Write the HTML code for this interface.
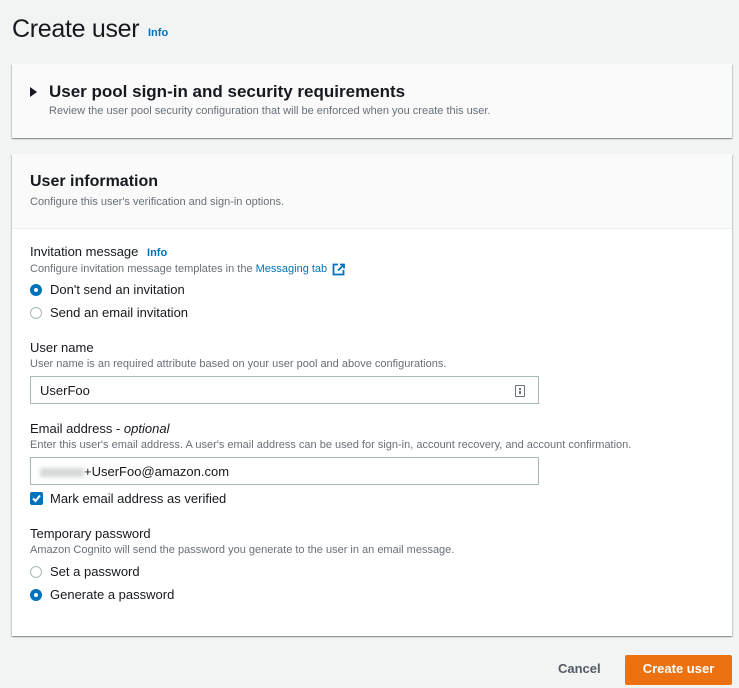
<!DOCTYPE html>
<html><head><style>
body{margin:0;width:739px;height:688px;background:#f2f3f3;font-family:"Liberation Sans",sans-serif;color:#16191f;position:relative;overflow:hidden}
.a{position:absolute;white-space:nowrap}
.s{font-size:11px;color:#687078}
.l{font-size:13px}
.lnk{color:#0073bb}
.panel{position:absolute;left:12px;width:720px;background:#fff;box-shadow:0 1px 1px rgba(0,28,36,.3),1px 1px 1px rgba(0,28,36,.15),-1px 1px 1px rgba(0,28,36,.15)}
.radio{position:absolute;width:12px;height:12px;border-radius:50%;box-sizing:border-box;border:1px solid #aab7b8;background:#fff}
.radio.on{border:4px solid #0073bb}
.inp{position:absolute;left:30px;width:509px;height:28px;box-sizing:border-box;border:1px solid #aab7b8;background:#fff;font-size:13px;line-height:28px;padding-left:9px}
</style></head><body>
<div class="a" style="left:12px;top:15px;font-size:25px;letter-spacing:-0.3px;color:#16191f">Create user</div>
<div class="a lnk" style="left:148px;top:27px;font-size:11px;font-weight:bold">Info</div>

<div class="panel" style="top:64px;height:74px;background:#fafafa"></div>
<div class="a" style="left:30px;top:87px;width:0;height:0;border-left:7px solid #16191f;border-top:5px solid transparent;border-bottom:5px solid transparent"></div>
<div class="a" style="left:49px;top:82px;font-size:17px;font-weight:bold">User pool sign-in and security requirements</div>
<div class="a s" style="left:49px;top:105px">Review the user pool security configuration that will be enforced when you create this user.</div>

<div class="panel" style="top:154px;height:482px"></div>
<div class="a" style="left:12px;top:154px;width:720px;height:74px;background:#fafafa;border-bottom:1px solid #eaeded"></div>
<div class="a" style="left:30px;top:173px;font-size:16px;font-weight:bold">User information</div>
<div class="a s" style="left:30px;top:196px">Configure this user's verification and sign-in options.</div>

<div class="a l" style="left:30px;top:244px">Invitation message <span class="lnk" style="font-size:11px;font-weight:bold;margin-left:5px">Info</span></div>
<div class="a s" style="left:30px;top:263px">Configure invitation message templates in the <span class="lnk">Messaging tab</span></div>
<svg class="a" style="left:332px;top:263px" width="14" height="13" viewBox="0 0 14 13"><path d="M6 1.5H1.5v10h10V7M8 1.5h4v4M12 1.5L6 7.5" fill="none" stroke="#0073bb" stroke-width="1.8"/></svg>
<div class="radio on" style="left:30px;top:284px"></div>
<div class="a l" style="left:50px;top:282px">Don't send an invitation</div>
<div class="radio" style="left:30px;top:307px"></div>
<div class="a l" style="left:50px;top:305px">Send an email invitation</div>

<div class="a l" style="left:30px;top:340px">User name</div>
<div class="a s" style="left:30px;top:358px">User name is an required attribute based on your user pool and above configurations.</div>
<div class="inp" style="top:376px">UserFoo</div>
<div class="a" style="left:515px;top:385px;width:8px;height:10px;border:1px solid #687078;border-radius:1px"><div style="position:absolute;left:3px;top:2px;width:2px;height:2px;background:#687078"></div><div style="position:absolute;left:3px;top:5px;width:2px;height:3px;background:#687078"></div></div>

<div class="a l" style="left:30px;top:421px">Email address - <i>optional</i></div>
<div class="a s" style="left:30px;top:439px">Enter this user's email address. A user's email address can be used for sign-in, account recovery, and account confirmation.</div>
<div class="inp" style="top:457px"><span style="display:inline-block;width:44px;height:9px;background:#d5d8d8;filter:blur(2px);vertical-align:middle"></span>+UserFoo@amazon.com</div>
<div class="a" style="left:30px;top:492px;width:13px;height:13px;background:#0073bb;border-radius:2px"><svg width="13" height="13" viewBox="0 0 13 13"><path d="M3 6.5l2.5 2.5 4.5-5.5" fill="none" stroke="#fff" stroke-width="2"/></svg></div>
<div class="a l" style="left:50px;top:491px">Mark email address as verified</div>

<div class="a l" style="left:30px;top:526px">Temporary password</div>
<div class="a s" style="left:30px;top:544px">Amazon Cognito will send the password you generate to the user in an email message.</div>
<div class="radio" style="left:30px;top:566px"></div>
<div class="a l" style="left:50px;top:564px">Set a password</div>
<div class="radio on" style="left:30px;top:589px"></div>
<div class="a l" style="left:50px;top:587px">Generate a password</div>

<div class="a" style="left:558px;top:661px;font-size:13px;font-weight:bold;color:#545b64">Cancel</div>
<div class="a" style="left:625px;top:655px;width:107px;height:30px;background:#ec7211;border-radius:2px;color:#fff;font-size:13px;font-weight:bold;text-align:center;line-height:28px">Create user</div>
</body></html>
